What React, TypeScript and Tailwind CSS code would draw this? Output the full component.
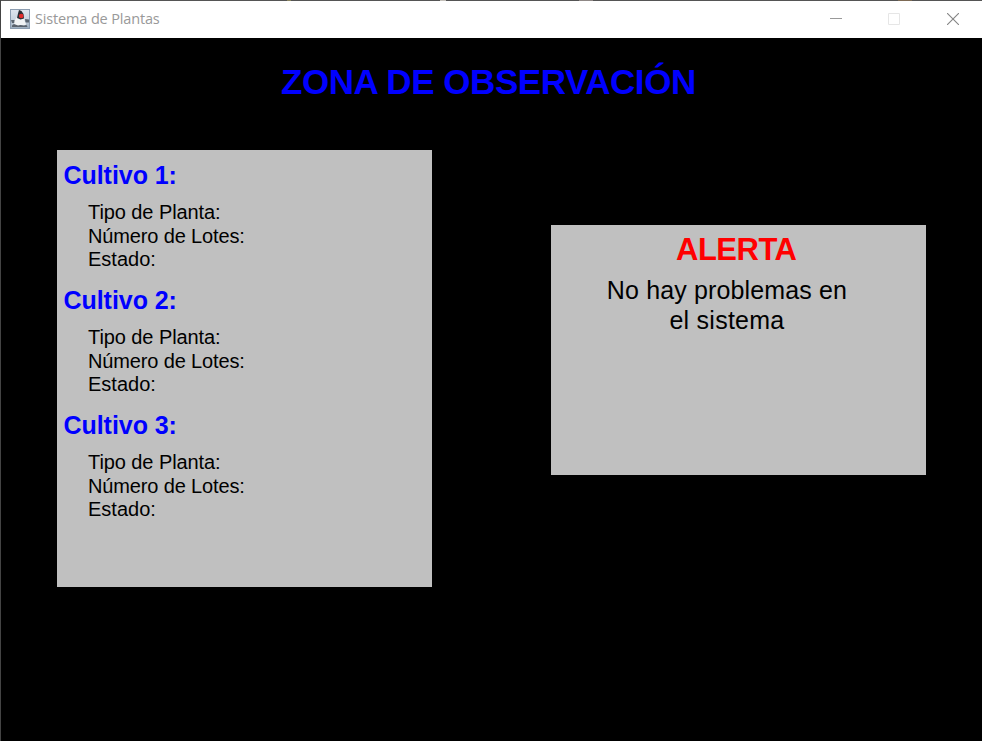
const crops = ["Cultivo 1:", "Cultivo 2:", "Cultivo 3:"];

function DukeIcon() {
  return (
    <svg width="20" height="20" viewBox="0 0 20 20" className="block shrink-0">
      <defs>
        <linearGradient id="tile" x1="0" y1="0" x2="0" y2="1">
          <stop offset="0" stopColor="#dfe5ee" />
          <stop offset="0.55" stopColor="#c8d3de" />
          <stop offset="1" stopColor="#9aabbd" />
        </linearGradient>
      </defs>
      <rect x="0.5" y="0.5" width="19" height="19" fill="url(#tile)" stroke="#8b9cb0" />
      <path d="M1 11h4.500v3H2zM15 10l4 .5v3h-3.500z" fill="#5b6571" />
      <path d="M7 8 4.500 11.500 4 16l4 1 3-1 4 1 1-2-1.500-3.500L14 9z" fill="#f1f3f5" />
      <path d="M9 1 8 4.500 7 9l3.500 1.500L14 9.500l-.5-4.500L11.500 2z" fill="#2c2e35" />
      <path d="M2 16.500l2-1.500 4 1.500 2.500-.5 3 .5 3-.5 1 2H2z" fill="#5a626d" />
      <circle cx="11.200" cy="7" r="2.300" fill="#e32c2c" />
    </svg>
  );
}

function TitleBar() {
  return (
    <header className="flex h-[37px] items-center bg-white pb-px pl-[9px]">
      <DukeIcon />
      <span className="ml-[5px] whitespace-nowrap font-['Open_Sans','Noto_Sans',sans-serif] text-[14.5px] leading-5 tracking-[-0.15px] text-[#999999]">
        Sistema de Plantas
      </span>
      <div className="ml-auto flex items-center pr-[23px]">
        <svg width="12" height="12" viewBox="0 0 12 12" shapeRendering="crispEdges">
          <path d="M0 5.5h12" stroke="#999999" />
        </svg>
        <svg width="12" height="12" viewBox="0 0 12 12" className="ml-[46px]">
          <path d="M.5 .5h11v11H.5z" fill="none" stroke="#e6e6e6" />
        </svg>
        <svg width="12" height="12" viewBox="0 0 12 12" className="ml-[47px]">
          <path d="M0 0 12 12M12 0 0 12" fill="none" stroke="#858585" strokeWidth="1.1" />
        </svg>
      </div>
    </header>
  );
}

function DesktopEdge() {
  return (
    <div className="flex h-px bg-[#555555]">
      <span className="ml-[286px] h-px w-1 bg-[#8a8460]" />
      <span className="ml-[149px] h-px w-[6px] bg-[#c4c0ba]" />
      <span className="ml-[133px] h-px w-[14px] bg-[#8f8886]" />
      <span className="ml-[305px] h-px w-[14px] bg-[#7d6a55]" />
    </div>
  );
}

function Crop({ title }: { title: string }) {
  return (
    <section className="h-[125px] pl-[6.5px] pt-[10px]">
      <h2 className="text-[25px] font-bold leading-[30px] tracking-[-0.05px] text-[#0000ff]">{title}</h2>
      <div className="pl-[24.5px] pt-[10px] text-[20px] leading-6 text-black">
        <p className="tracking-[-0.08px]">Tipo de Planta:</p>
        <p className="tracking-[-0.14px]">Número de Lotes:</p>
        <p className="-mt-px">Estado:</p>
      </div>
    </section>
  );
}

export default function App() {
  return (
    <div className="h-[741px] w-[982px] overflow-hidden border-l border-l-[#444444] bg-black font-['Liberation_Sans',Arial,sans-serif]">
      <DesktopEdge />
      <TitleBar />
      <main>
        <h1 className="whitespace-nowrap pl-[280px] pt-6 text-[35px] font-bold leading-10 tracking-[-0.45px] text-[#0000ff]">
          ZONA DE OBSERVACIÓN
        </h1>
        <div className="mt-12 flex items-start pl-14">
          <div className="h-[437px] w-[375px] bg-[#c0c0c0]">
            {crops.map((title) => (
              <Crop key={title} title={title} />
            ))}
          </div>
          <div className="ml-[119px] mt-[75px] h-[250px] w-[375px] bg-[#c0c0c0] pt-[7px]">
            <h2 className="pl-[125px] text-[31px] font-bold leading-9 tracking-[-0.5px] text-[#ff0000]">ALERTA</h2>
            <p className="ml-[45px] mt-[7px] w-[262px] text-center text-[25px] leading-[30px] tracking-[0.14px] text-black">
              No hay problemas en
              <br />
              <span className="tracking-[0.25px]">el sistema</span>
            </p>
          </div>
        </div>
      </main>
    </div>
  );
}
